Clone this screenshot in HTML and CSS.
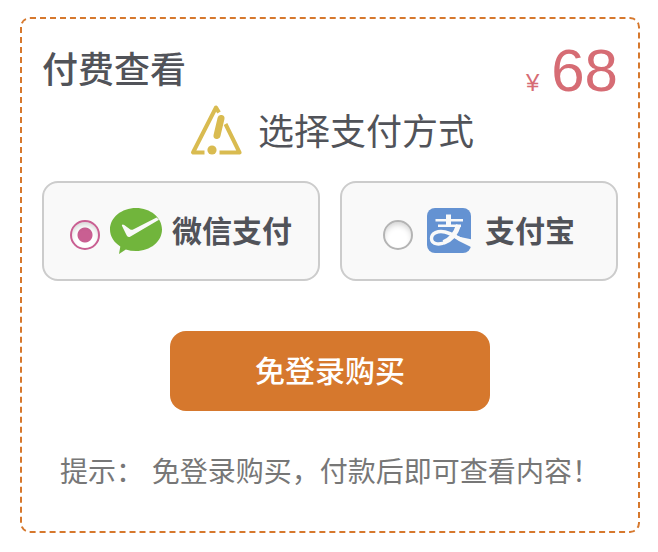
FILE: index.html
```html
<!DOCTYPE html>
<html lang="zh-CN">
  <head>
    <meta charset="UTF-8" />
    <meta name="viewport" content="width=device-width, initial-scale=1.0" />
    <title>付费查看</title>
    <link rel="stylesheet" href="styles.css">
  </head>
  <body>
    <form class="pay-box">
      <div class="pay-header">
        <h2>付费查看</h2>
        <div class="price"><small>¥</small><span>68</span></div>
      </div>

      <div class="pay-tip">
        <svg class="warn-icon" viewBox="0 0 52 52" aria-hidden="true">
          <g fill="none" stroke="#d9bb50" stroke-linecap="round" stroke-linejoin="round">
            <path stroke-width="4" stroke-linecap="butt" d="M29 8.500L26 3.500L3 48.500H14.500" />
            <path stroke-width="4" stroke-linecap="butt" d="M35.500 20L49.500 48.500H29.500" />
            <path stroke-width="7" d="M31 14.500L27 31.500" />
          </g>
          <circle cx="22" cy="46" r="4.600" fill="#d9bb50" />
        </svg>
        <span>选择支付方式</span>
      </div>

      <div class="pay-types">
        <label class="pay-type">
          <input type="radio" name="pay_type" value="wechat" checked />
          <svg class="pay-icon" viewBox="0 0 52 52" aria-hidden="true">
            <path fill="#71b53c" d="M26 3C40.400 3 52 12.500 52 24.500S40.400 46 26 46Q20.500 46 15.800 44.400L9 49L10.300 41.400C4 37.500 0 31.300 0 24.500C0 12.500 11.600 3 26 3Z" />
            <path fill="#f9f9f9" d="M11.800 20.400Q12.400 18.600 14.200 20L20 24.200Q21.600 25.200 23.600 24.200L46.600 12.500L49 14.800L20.500 31.400Q17.800 33 16.600 30.200Z" />
          </svg>
          <span>微信支付</span>
        </label>
        <label class="pay-type">
          <input type="radio" name="pay_type" value="alipay" />
          <svg class="pay-icon" viewBox="0 0 52 52" aria-hidden="true">
            <rect x="4" y="3" width="44" height="45" rx="8" fill="#6492d2" />
            <g fill="none" stroke="#f9f9f9">
              <path stroke-width="2.400" d="M12.500 15.200H40M15 20.800H38" />
              <path stroke-width="5" d="M25.500 9.500V21" />
              <path stroke-width="5" d="M35.500 20C33.500 27 28.500 34.500 20.500 37.500" />
              <path stroke-width="3.400" d="M24 36C18 40.500 8.500 40 8.500 33.500C8.500 28 15 25.500 22 27C31 29 36 35 48 38.500" />
            </g>
            <path fill="#f9f9f9" d="M27 28.400Q37 32.500 48 34.200V42Q36 37 25 29Z" />
          </svg>
          <span>支付宝</span>
        </label>
      </div>

      <button type="button" class="pay-btn">免登录购买</button>
      <p class="pay-note">提示： 免登录购买，付款后即可查看内容！</p>
    </form>
  </body>
</html>
```

FILE: styles.css
```css
* {
  box-sizing: border-box;
}

body {
  margin: 17px 18px 17px 20px;
  background-color: #fff;
  color: #515359;
  font-family: "Liberation Sans", "Noto Sans CJK SC", sans-serif;
}

.pay-box {
  padding: 20px;
  border: 2px dashed #d6782d;
  border-radius: 10px;
}

.pay-header {
  display: flex;
  justify-content: space-between;
  align-items: center;
  height: 64px;
}

.pay-header h2 {
  margin: 0;
  font-size: 36px;
  font-weight: 500;
  line-height: 60px;
}

.price {
  display: flex;
  align-items: baseline;
  gap: 12px;
  margin-top: 12px;
  color: #d66c74;
  font-size: 60px;
  line-height: 64px;
}

.price small {
  font-size: 24px;
}

.pay-tip {
  display: flex;
  justify-content: center;
  align-items: center;
  gap: 16px;
  height: 54px;
  padding-left: 4px;
  font-size: 36px;
  line-height: 54px;
}

.pay-tip span {
  padding-top: 6px;
}

.warn-icon {
  width: 52px;
  height: 52px;
}

.pay-types {
  display: grid;
  grid-template-columns: 1fr 1fr;
  gap: 20px;
  margin-top: 24px;
}

.pay-type {
  display: flex;
  justify-content: center;
  align-items: center;
  gap: 10px;
  height: 100px;
  border: 2px solid #ccc;
  border-radius: 16px;
  background-color: #f9f9f9;
  font-size: 30px;
  font-weight: 700;
  line-height: 40px;
  cursor: pointer;
}

.pay-type span {
  padding-top: 2px;
}

.pay-type input {
  appearance: none;
  width: 30px;
  height: 30px;
  margin: 8px 0 0;
  border: 2px solid #b4b4b4;
  border-radius: 50%;
  background-color: #fff;
  box-shadow: inset 0 4px 6px -2px rgba(0, 0, 0, 0.2);
  cursor: pointer;
}

.pay-type input:checked {
  border-color: #c95f92;
  background-image: radial-gradient(circle, #c95f92 7px, transparent 8px);
}

.pay-icon {
  width: 52px;
  height: 52px;
}

.pay-btn {
  display: block;
  width: 320px;
  max-width: 100%;
  height: 80px;
  margin: 50px auto 0;
  padding: 0 0 4px;
  border: none;
  border-radius: 16px;
  background-color: #d6782d;
  color: #fff;
  font-family: inherit;
  font-size: 30px;
  font-weight: 500;
  cursor: pointer;
}

.pay-note {
  margin: 42px 0 18px;
  color: #777;
  font-size: 28px;
  line-height: 40px;
  text-align: center;
}
```
